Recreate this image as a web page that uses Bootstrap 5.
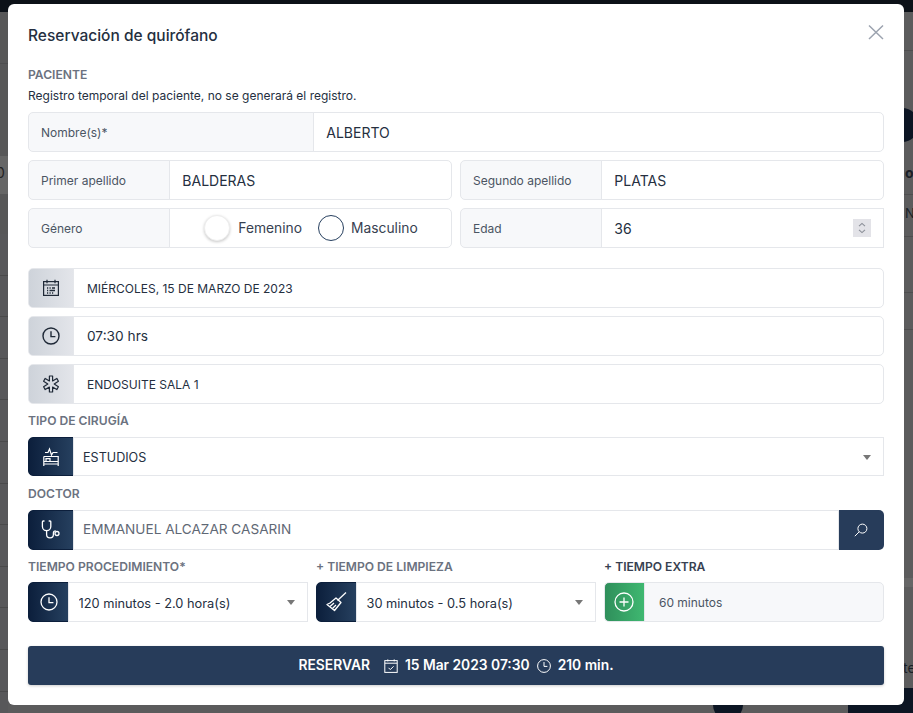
<!DOCTYPE html>
<html lang="es"><head><meta charset="utf-8"><title>Reservación de quirófano</title>
<link href="https://cdn.jsdelivr.net/npm/bootstrap@5.3.0/dist/css/bootstrap.min.css" rel="stylesheet">
<style>
html,body{height:713px;overflow:hidden}
body{background:#5b5b5c;font-family:Inter,"Liberation Sans",sans-serif;color:#252f3f;position:relative}
.bd-top{position:absolute;left:0;right:0;top:0;height:12px;background:#0c1118}
.bd-strip{position:absolute;top:12px;height:701px}
.bd-l{left:0;width:8px;background:
 linear-gradient(#4e4e4f,#4e4e4f) 0 51px/100% 1px no-repeat,
 linear-gradient(#666,#666) 0 144px/100% 38px no-repeat,
 repeating-linear-gradient(180deg,#58585a 0 40.6px,#4a4a4b 40.6px 41.600px) 0 222px/100% 100% no-repeat,#575758}
.bd-r{left:904px;width:9px;background:
 linear-gradient(#4e4e4f,#4e4e4f) 0 38px/100% 1px no-repeat,
 linear-gradient(#4e4e4f,#4e4e4f) 0 182px/100% 1px no-repeat,
 linear-gradient(#4e4e4f,#4e4e4f) 0 224px/100% 1px no-repeat,
 linear-gradient(#4e4e4f,#4e4e4f) 0 280px/100% 1px no-repeat,
 linear-gradient(#4e4e4f,#4e4e4f) 0 317px/100% 1px no-repeat,
 linear-gradient(#666,#666) 0 566px/100% 9px no-repeat,#5c5c5d}
.bd-round{position:absolute;background:#0c1523;border-radius:50%}
.bd-r1{left:885px;top:108px;width:34px;height:34px}
.bd-r2{left:713px;top:690px;width:30px;height:30px}
.bd-blk{position:absolute;left:848px;top:688px;width:65px;height:25px;background:#0c1523}
.bd-txt{position:absolute;font-size:14px;line-height:16px;white-space:nowrap;color:#1a1f27}
.bd-t1{left:-4px;top:165px;color:#222}
.bd-t2{left:905px;top:165px;font-weight:700}
.bd-t3{left:905px;top:205px;font-size:13px}
.bd-t4{left:903px;top:660px}
.sheet{position:relative;z-index:2;width:896px;margin:4px 0 0 8px;height:701px;border:0;border-radius:6px;padding:20px;background:#fff}
.sheet-title{font-size:15.5px;font-weight:500;line-height:22px;margin:0;color:#252f3f;padding-top:1px;height:22px}
.sheet-close{position:absolute;top:20px;right:20px;width:16px;height:16px;padding:0;border:0;background:none;display:flex}
.sec{font-size:12.1px;font-weight:600;line-height:16px;color:#6b7280}
.sec.strong{color:#374151}
.sec-a{margin-top:21px}.sec-b{margin-top:9px}.sec-c{margin-top:10px}
.note{font-size:12px;line-height:16px;color:#252f3f;margin-top:5px}
.grp{height:40px;flex-wrap:nowrap}
.grp.h39{height:39px}
.mt8{margin-top:8px}.mt7{margin-top:7px}.mt9{margin-top:9px}.mt20{margin-top:20px}.mt24{margin-top:24px}
.grp .input-group-text,.grp .form-control,.grp .form-select{border-color:#e5e7eb;height:100%;border-radius:5px}
.grp .input-group-text{background:#f7f8fa;color:#4b5563;font-size:12px;padding:1px 12px 0}
.grp .form-control{font-size:14px;color:#252f3f;padding:0 12px;box-shadow:none}
.lbl-w{width:calc(33.33% + 1px);flex:0 0 calc(33.33% + 1px)}
.ctl-sm{font-size:12px!important;padding-left:13px!important}
.ctl-h{font-size:13.7px!important;padding-left:13px!important}
.ic-gray{width:46px;flex:0 0 46px;justify-content:center;padding:0!important;background:linear-gradient(90deg,#ced3da,#e3e5ea)!important}
.ic-dark{width:46px;flex:0 0 46px;justify-content:center;padding:0!important;background:linear-gradient(90deg,#0c1f3c,#26405f)!important;border-color:#0c1f3c!important}
.ic-dark.nar{width:41px;flex-basis:41px}
.ic-green{width:41px;flex:0 0 41px;justify-content:center;padding:0!important;background:linear-gradient(90deg,#2f8f5b,#3fb871)!important;border-color:#e5e7eb!important}
.grp .form-select{font-size:12.6px;color:#252f3f;padding:3px 30px 0 9px;box-shadow:none;background-image:none}
.grp .form-select.sel-sm{font-size:12.8px;padding-top:3px;padding-left:9.5px}
.caret{position:absolute;z-index:6;right:13px;top:18px;width:0;height:0;border-left:4.5px solid transparent;border-right:4.5px solid transparent;border-top:5px solid #777}
.radio-cell{flex:1 1 0;min-width:0;border:1px solid #e5e7eb;border-radius:0 5px 5px 0;display:flex;align-items:center;font-size:13.8px;color:#374151;margin-left:-1px;padding-left:34px;background:#fff}
.radio-cell .form-check-input{width:26px;height:26px;margin:0 8px 0 0;flex:none;border:1px solid #eee;box-shadow:0 1px 3px rgba(0,0,0,.22)}
.radio-cell .form-check-input.mas{border:1px solid #27405f;box-shadow:none;margin:0 7px 0 16px}
.spin{position:absolute;z-index:6;right:13px;top:11px;width:18px;height:18px;background:#e3e3e8;display:flex}
input[type=number]::-webkit-inner-spin-button{display:none}
.go{height:39px;background:#273c5a;border:0;border-radius:3px;color:#fff;font-size:13.8px;font-weight:600;box-shadow:0 1px 3px rgba(0,0,0,.2);gap:7px}
.go:hover{background:#273c5a;color:#fff}
.go-lbl{margin-right:7px}
.srch{width:46px;flex:0 0 46px;background:#273c5a;border:0;display:flex;align-items:center;justify-content:center;padding:0;border-radius:0 5px 5px 0!important}
.ctl-place{color:#5f6875!important;font-size:13.6px!important;padding-left:9px!important;padding-bottom:2px!important}
.readonly-box{background:#f7f8fa!important;font-size:12px!important;color:#4b5563!important;padding-left:14px!important}
</style></head>
<body>
<div class="bd-top"></div>
<div class="bd-strip bd-l"></div><div class="bd-strip bd-r"></div>
<div class="bd-round bd-r1"></div><div class="bd-round bd-r2"></div><div class="bd-blk"></div>
<span class="bd-txt bd-t1">0</span><span class="bd-txt bd-t2">o</span><span class="bd-txt bd-t3">N</span><span class="bd-txt bd-t4">te</span>

<div class="modal-content sheet">
  <button class="sheet-close" type="button" aria-label="Cerrar"><svg width="16" height="16" viewBox="0 0 16 16" fill="none" stroke="#9ca3af" stroke-width="1.5"><path d="M1 1.500 15 15M15 1.500 1 15"/></svg></button>
  <h5 class="sheet-title mb-0">Reservación de quirófano</h5>
  <div class="sec sec-a">PACIENTE</div>
  <div class="note">Registro temporal del paciente, no se generará el registro.</div>

  <div class="input-group grp mt8"><span class="input-group-text lbl-w">Nombre(s)*</span><input class="form-control" value="ALBERTO"></div>

  <div class="row g-2 mt-0">
    <div class="col-6 mt-2"><div class="input-group grp"><span class="input-group-text lbl-w">Primer apellido</span><input class="form-control" value="BALDERAS"></div></div>
    <div class="col-6 mt-2"><div class="input-group grp"><span class="input-group-text lbl-w">Segundo apellido</span><input class="form-control" value="PLATAS"></div></div>
    <div class="col-6 mt-2"><div class="input-group grp"><span class="input-group-text lbl-w">Género</span><div class="radio-cell"><input class="form-check-input" type="radio" name="g"><span>Femenino</span><input class="form-check-input mas" type="radio" name="g"><span>Masculino</span></div></div></div>
    <div class="col-6 mt-2"><div class="input-group grp position-relative"><span class="input-group-text lbl-w">Edad</span><input class="form-control" type="number" value="36"><span class="spin"><svg width="18" height="18" viewBox="0 0 18 18" fill="none" stroke="#8b8f98" stroke-width="1.100"><path d="M6 7.200 9 4.400l3 2.800M6 10.800l3 2.800 3-2.800"/></svg></span></div></div>
  </div>

  <div class="input-group grp mt20"><span class="input-group-text ic-gray">
    <svg width="18" height="18" viewBox="0 0 18 18" fill="none" stroke="#1f2937" stroke-width="1.200"><rect x="1.600" y="2.600" width="14.800" height="13.800"/><path d="M1.600 6h14.800M5 .8v3.400M13 .8v3.400"/><path d="M5 9h1.200M7.500 9h1.200M10 9h3M5 11.500h1.200M7.500 11.500h5.500M5 14h1.200M7.500 14h1.200M10 14h1.200" stroke-width="1.400"/></svg></span>
    <input class="form-control ctl-sm" value="MIÉRCOLES, 15 DE MARZO DE 2023"></div>
  <div class="input-group grp mt8"><span class="input-group-text ic-gray">
    <svg width="18" height="18" viewBox="0 0 18 18" fill="none" stroke="#1f2937" stroke-width="1.400"><circle cx="9" cy="9" r="8"/><path d="M9 4.200V9.600h4.400"/></svg></span>
    <input class="form-control ctl-h" value="07:30 hrs"></div>
  <div class="input-group grp mt8"><span class="input-group-text ic-gray">
    <svg width="18" height="18" viewBox="0 0 18 18" fill="none" stroke="#1f2937" stroke-width="1.200" stroke-linejoin="round"><path d="M7.400 1h3.200v4.900l4.200-2.500 1.600 2.800L12.200 9l4.200 2.800-1.600 2.800-4.200-2.500V17H7.400v-4.900l-4.200 2.500-1.600-2.800L5.800 9 1.600 6.200l1.600-2.800 4.200 2.500z"/></svg></span>
    <input class="form-control ctl-sm" value="ENDOSUITE SALA 1"></div>

  <div class="sec sec-b">TIPO DE CIRUGÍA</div>
  <div class="input-group grp h39 position-relative mt8"><span class="input-group-text ic-dark">
    <svg width="20" height="20" viewBox="0 0 20 20" fill="none" stroke="#fff" stroke-width="1.200"><path d="M4 5.500h3l1.500-3.500 2 6 1.500-2.500h4.500"/><path d="M2.800 9.500V19M2.800 17h14.400v2M17.200 17V9.500H2.800M2.800 14.500h14.400"/><path d="M5 14v-2.300h4V14"/></svg></span>
    <select class="form-select"><option>ESTUDIOS</option></select><span class="caret"></span></div>

  <div class="sec sec-c">DOCTOR</div>
  <div class="input-group grp mt8"><span class="input-group-text ic-dark">
    <svg width="20" height="22" viewBox="0 0 20 22" fill="none" stroke="#fff" stroke-width="1.300"><path d="M3.500 2H2.200Q1.400 2 1.400 3v4.500a4.200 4.200 0 0 0 8.400 0V3Q9.800 2 9 2H7.700"/><path d="M5.600 11.800v3.700a3.400 3.400 0 0 0 6.800 0v-1.800a2 2 0 0 1 2.300-1.800"/><circle cx="16" cy="14.500" r="2"/></svg></span>
    <input class="form-control ctl-place" value="EMMANUEL ALCAZAR CASARIN"><button class="srch" type="button" aria-label="Buscar"><svg width="14" height="14" viewBox="0 0 14 14" fill="none" stroke="#fff" stroke-width="1"><circle cx="8.400" cy="5.600" r="4.500"/><path d="M5.200 8.800.8 13.200"/></svg></button></div>

  <div class="row g-2 mt-0">
    <div class="col-4 mt9"><div class="sec">TIEMPO PROCEDIMIENTO*</div>
      <div class="input-group grp position-relative mt7"><span class="input-group-text ic-dark nar"><svg width="18" height="18" viewBox="0 0 18 18" fill="none" stroke="#fff" stroke-width="1.300"><circle cx="9" cy="9" r="8"/><path d="M9 4.200V9.600h4.400"/></svg></span><select class="form-select sel-sm"><option>120 minutos - 2.0 hora(s)</option></select><span class="caret"></span></div></div>
    <div class="col-4 mt9"><div class="sec">+ TIEMPO DE LIMPIEZA</div>
      <div class="input-group grp position-relative mt7"><span class="input-group-text ic-dark nar"><svg width="22" height="22" viewBox="0 0 22 22" fill="none" stroke="#fff" stroke-width="1.300" stroke-linejoin="round"><path d="M12.500 9.500 21 1.500"/><path d="M11 7l5 4.500-6.500 8L2 13.500 5 12z"/><path d="M5 15.500 9 12M7.500 17.500 11 14"/></svg></span><select class="form-select sel-sm"><option>30 minutos - 0.5 hora(s)</option></select><span class="caret"></span></div></div>
    <div class="col-4 mt9"><div class="sec strong">+ TIEMPO EXTRA</div>
      <div class="input-group grp mt7"><span class="input-group-text ic-green"><svg width="20" height="20" viewBox="0 0 20 20" fill="none" stroke="#fff" stroke-width="1.300"><circle cx="10" cy="10" r="9"/><path d="M10 5.500v9M5.500 10h9"/></svg></span><input class="form-control readonly-box" readonly value="60 minutos"></div></div>
  </div>

  <button type="button" class="btn go w-100 d-flex align-items-center justify-content-center mt24">
    <span class="go-lbl">RESERVAR</span>
    <svg width="14" height="14" viewBox="0 0 14 14" fill="none" stroke="#fff" stroke-width="1"><rect x=".8" y="1.600" width="12.400" height="11.800"/><path d="M.8 4.200h12.400M3.800.4v2M10.200.4v2M4.500 8.800l1.800 1.800 3.300-3.300"/></svg>
    <span>15 Mar 2023 07:30</span>
    <svg width="14" height="14" viewBox="0 0 14 14" fill="none" stroke="#fff" stroke-width="1"><circle cx="7" cy="7" r="6.400"/><path d="M7 3v4.400h3.400"/></svg>
    <span>210 min.</span>
  </button>
</div>
</body></html>
